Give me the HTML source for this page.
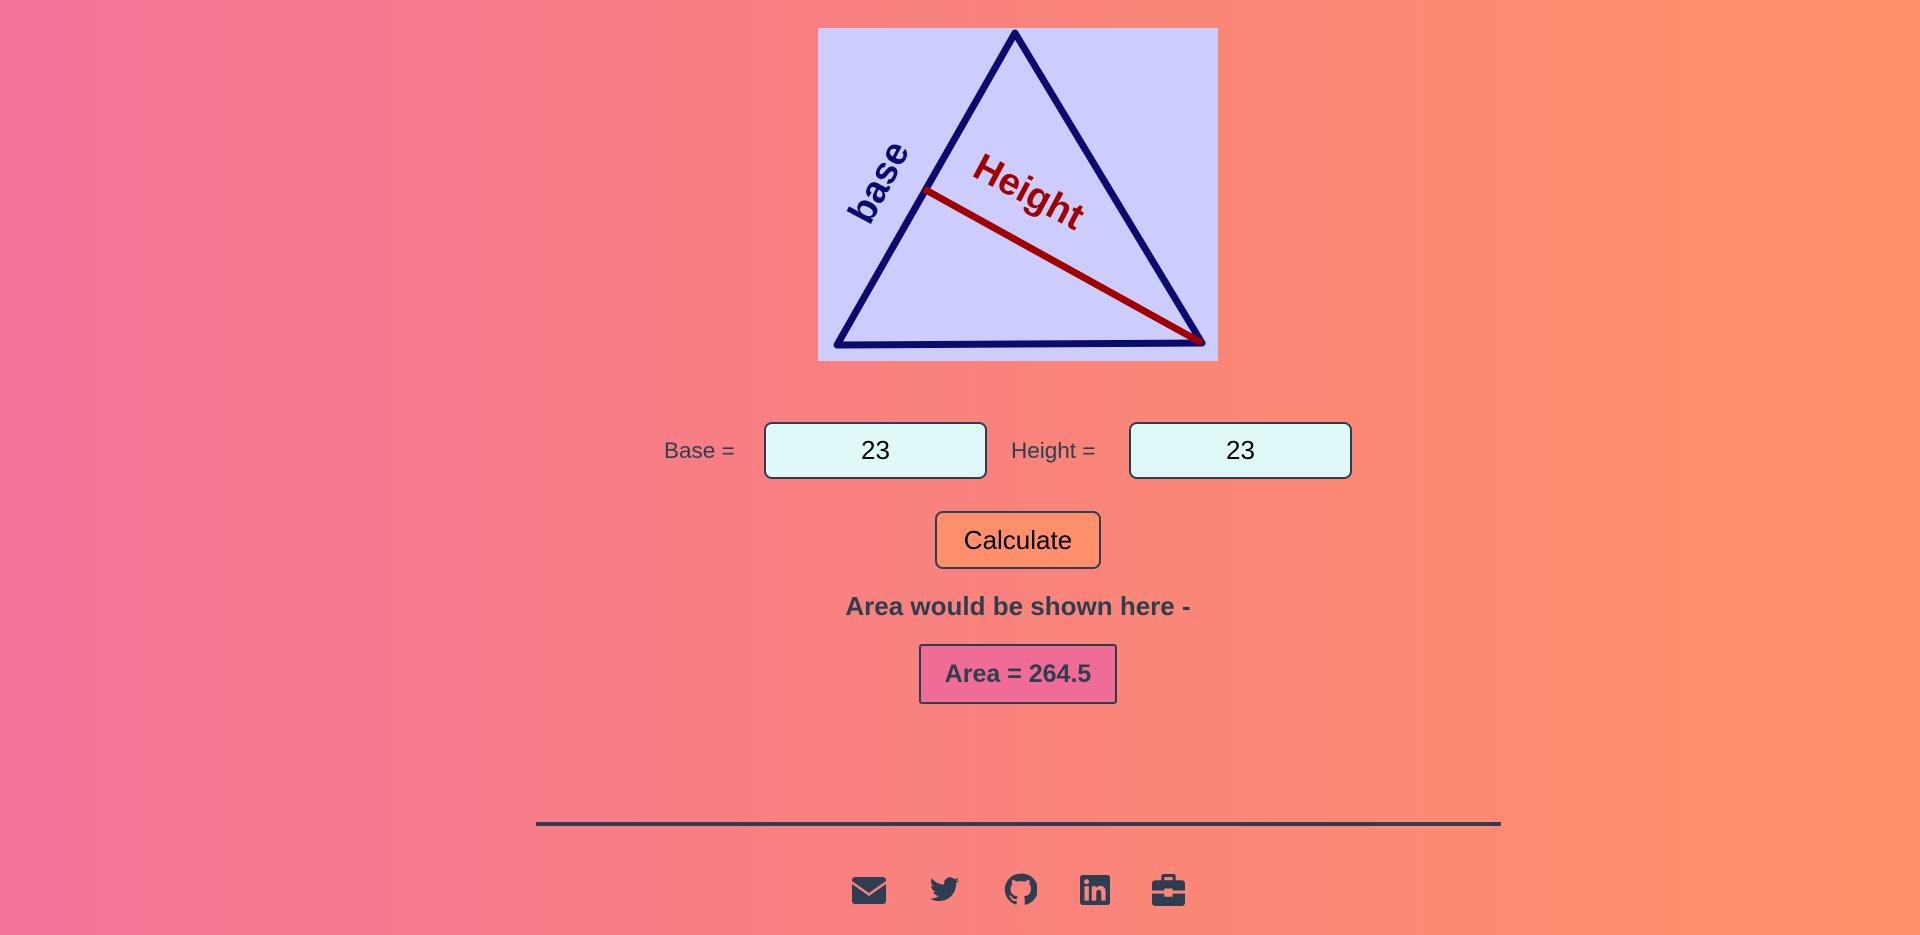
<!DOCTYPE html>
<html><head><meta charset="utf-8"><style>
html,body{margin:0;padding:0;}
body{width:1920px;height:935px;overflow:hidden;position:relative;background:linear-gradient(90deg,#f37399 0%,#f8817f 45%,#ff9169 100%);font-family:"Liberation Sans",sans-serif;color:#2e3e50;}
.a{position:absolute;}
.lbl{font-size:22.5px;color:#2e3e50;}
.inp{background:#dff8f8;border:2px solid #2e3e50;border-radius:8px;box-sizing:border-box;width:223px;height:57px;font-size:26px;color:#000;text-align:center;line-height:53px;}
.btn{left:935px;top:511px;width:166px;height:58px;box-sizing:border-box;background:#fe8f6d;border:2px solid #2e3e50;border-radius:8px;font-size:26px;color:#000;text-align:center;line-height:54px;}
.res{left:919px;top:644px;width:198px;height:60px;box-sizing:border-box;background:#f06c96;border:2px solid #2e3e50;border-radius:3px;font-size:25px;font-weight:bold;text-align:center;line-height:56px;}
</style></head><body>
<svg class="a" style="left:818px;top:28px" width="400" height="333" viewBox="0 0 400 333">
<rect width="400" height="333" fill="#cccdfd"/>
<polygon points="197,5 19,317 384,315" fill="none" stroke="#0c0a6e" stroke-width="7" stroke-linejoin="round"/>
<line x1="106" y1="161" x2="384" y2="315" stroke="#a00000" stroke-width="7"/>
<text x="0" y="0" transform="translate(72,160) rotate(-62)" font-family="Liberation Sans" font-weight="bold" font-size="38" fill="#0c0a6e" text-anchor="middle">base</text>
<text x="0" y="0" transform="translate(205,175) rotate(28)" font-family="Liberation Sans" font-weight="bold" font-size="38" fill="#a00000" text-anchor="middle">Height</text>
</svg>
<div class="a lbl" style="left:664px;top:438px">Base =</div>
<div class="a inp" style="left:764px;top:422px">23</div>
<div class="a lbl" style="left:1011px;top:438px">Height =</div>
<div class="a inp" style="left:1129px;top:422px">23</div>
<div class="a btn">Calculate</div>
<div class="a" style="left:760px;width:516px;top:591px;text-align:center;font-size:26px;font-weight:bold">Area would be shown here -</div>
<div class="a res">Area = 264.5</div>
<div class="a" style="left:536px;top:822px;width:965px;height:4px;background:#2e3e50"></div>
<svg class="a" style="left:852px;top:874px" width="34" height="32" viewBox="0 0 34 32"><path d="M3 3h28a3 3 0 0 1 3 3v1L17 19 0 7V6a3 3 0 0 1 3-3zM0 10l17 12 17-12v17a3 3 0 0 1-3 3H3a3 3 0 0 1-3-3z" fill="#2e3e50"/></svg>
<svg class="a" style="left:928px;top:874px" width="33" height="32" viewBox="0 0 24 24"><path d="M23 4.6a9 9 0 0 1-2.6.7 4.6 4.6 0 0 0 2-2.5 9 9 0 0 1-2.9 1.1A4.5 4.5 0 0 0 11.8 8 12.8 12.8 0 0 1 2.5 3.3a4.5 4.5 0 0 0 1.4 6 4.5 4.5 0 0 1-2-.6 4.5 4.5 0 0 0 3.6 4.5 4.5 4.5 0 0 1-2 .1 4.5 4.5 0 0 0 4.2 3.1A9 9 0 0 1 1 18.3a12.8 12.8 0 0 0 6.9 2c8.3 0 12.8-6.9 12.8-12.8v-.6A9 9 0 0 0 23 4.6z" fill="#2e3e50"/></svg>
<svg class="a" style="left:1004px;top:873px" width="33" height="33" viewBox="0 0 24 24"><path d="M12 .5a11.5 11.5 0 0 0-3.6 22.4c.6.1.8-.3.8-.6v-2c-3.2.7-3.900-1.5-3.9-1.5-.5-1.3-1.3-1.7-1.3-1.7-1-.7.1-.7.1-.7 1.2.1 1.8 1.2 1.8 1.2 1 1.8 2.8 1.3 3.5 1 .1-.8.4-1.3.7-1.6-2.6-.3-5.3-1.3-5.3-5.7 0-1.3.5-2.3 1.2-3.1-.1-.3-.5-1.5.1-3.100 0 0 1-.3 3.2 1.2a11 11 0 0 1 5.8 0c2.2-1.5 3.2-1.2 3.2-1.2.6 1.6.2 2.8.1 3.1.8.8 1.2 1.8 1.2 3.1 0 4.4-2.7 5.4-5.3 5.7.4.4.8 1.1.8 2.2v3.3c0 .3.2.7.8.6A11.5 11.5 0 0 0 12 .5z" fill="#2e3e50"/></svg>
<svg class="a" style="left:1080px;top:875px" width="30" height="30" viewBox="0 0 24 24"><path d="M22 0H2a2 2 0 0 0-2 2v20a2 2 0 0 0 2 2h20a2 2 0 0 0 2-2V2a2 2 0 0 0-2-2zM7.1 20.5H3.6V9h3.5zM5.3 7.4a2 2 0 1 1 0-4 2 2 0 0 1 0 4zM20.5 20.5H17v-5.6c0-1.3 0-3-1.9-3s-2.1 1.5-2.1 2.9v5.7H9.4V9h3.4v1.6c.5-.9 1.6-1.9 3.4-1.9 3.6 0 4.3 2.4 4.3 5.5z" fill="#2e3e50"/></svg>
<svg class="a" style="left:1152px;top:874px" width="33" height="32" viewBox="0 0 32 31"><path d="M11 0h10a2 2 0 0 1 2 2v4h6a3 3 0 0 1 3 3v7H20v-2h-8v2H0V9a3 3 0 0 1 3-3h6V2a2 2 0 0 1 2-2zm1 3v3h8V3zM0 19h12v3h8v-3h12v9a3 3 0 0 1-3 3H3a3 3 0 0 1-3-3z" fill="#2e3e50"/></svg>
</body></html>
